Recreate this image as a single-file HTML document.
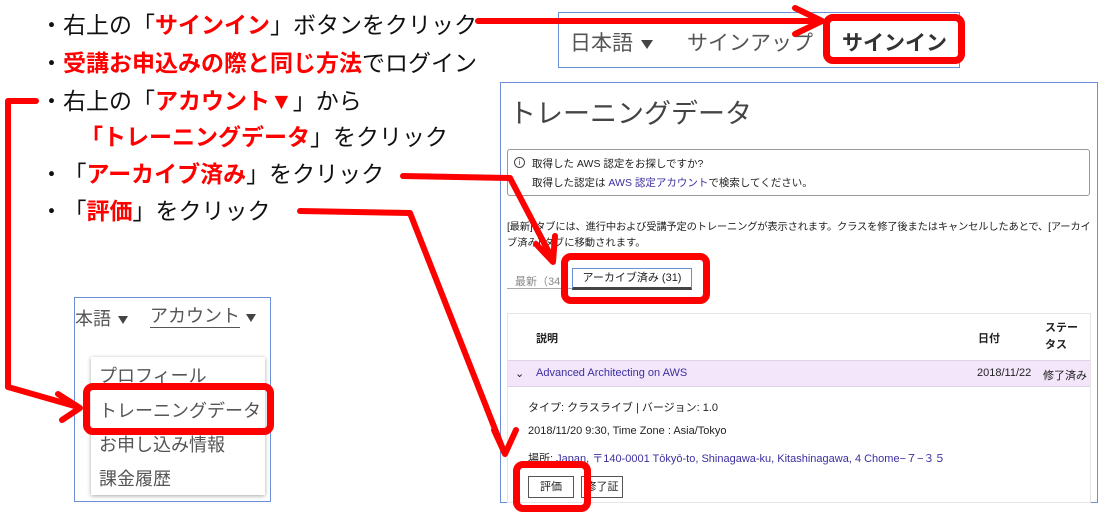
<!DOCTYPE html>
<html><head><meta charset="utf-8"><style>
*{margin:0;padding:0;box-sizing:border-box}
body{width:1109px;height:517px;background:#fff;position:relative;overflow:hidden;font-family:"Liberation Sans","Noto Sans CJK JP",sans-serif}
.a{position:absolute;white-space:nowrap}
.l{font-size:23px;color:#111;line-height:28px}
.r{color:#f00;font-weight:bold}
.s{font-size:11px;color:#222}
.tri{display:inline-block;width:0;height:0;border-left:6px solid transparent;border-right:6px solid transparent;border-top:9px solid #444;vertical-align:middle;margin-left:4px}
</style></head><body>
<div class="a l" style="left:40px;top:11px">・右上の「<span class="r">サインイン</span>」ボタンをクリック</div>
<div class="a l" style="left:40px;top:49px">・<span class="r">受講お申込みの際と同じ方法</span>でログイン</div>
<div class="a l" style="left:40px;top:87px">・右上の「<span class="r">アカウント▼</span>」から</div>
<div class="a l" style="left:80px;top:123px"><span class="r">「トレーニングデータ</span>」をクリック</div>
<div class="a l" style="left:40px;top:160px">・<span style="margin-left:12px">「</span><span class="r">アーカイブ済み</span>」をクリック</div>
<div class="a l" style="left:40px;top:197px">・<span style="margin-left:12px">「</span><span class="r">評価</span>」をクリック</div>

<!-- top-right nav -->
<div class="a" style="left:558px;top:12px;width:402px;height:56px;border:1px solid #6a8fd8"></div>
<div class="a" style="left:570px;top:27px;font-size:21px;color:#555">日本語<span class="tri" style="margin-left:8px"></span></div>
<div class="a" style="left:687px;top:27px;font-size:21px;color:#555">サインアップ</div>
<div class="a" style="left:842px;top:27px;font-size:21px;color:#333;font-weight:bold">サインイン</div>
<div class="a" style="left:823px;top:14px;width:142px;height:50px;border:7px solid #f00;border-radius:10px"></div>

<!-- main screenshot -->
<div class="a" style="left:500px;top:82px;width:598px;height:421px;border:1px solid #6a8fd8"></div>
<div class="a" style="left:509px;top:92px;font-size:27px;color:#444">トレーニングデータ</div>
<div class="a" style="left:507px;top:149px;width:583px;height:47px;border:1px solid #999;border-radius:3px"></div>
<div class="a" style="left:514px;top:157px;width:11px;height:11px;border:1px solid #444;border-radius:50%;font-size:8px;text-align:center;line-height:9px;color:#444">i</div>
<div class="a s" style="left:532px;top:156px;font-size:10.5px">取得した AWS 認定をお探しですか?</div>
<div class="a s" style="left:532px;top:175px;font-size:10.5px">取得した認定は <span style="color:#3b2fa0">AWS 認定アカウント</span>で検索してください。</div>
<div class="a s" style="left:507px;top:218px;font-size:10.3px;letter-spacing:-0.2px">[最新] タブには、進行中および受講予定のトレーニングが表示されます。クラスを修了後またはキャンセルしたあとで、[アーカイ</div>
<div class="a s" style="left:507px;top:234px;font-size:10.3px">ブ済み] タブに移動されます。</div>
<div class="a" style="left:507px;top:288px;width:160px;height:1px;background:#aaa"></div>
<div class="a s" style="left:515px;top:273px;color:#888">最新（34</div>
<div class="a" style="left:572px;top:268px;width:120px;height:22px;border:1px solid #6a8fd8;border-bottom:3px solid #444;background:#fff;font-size:11px;text-align:center;line-height:19px;color:#222">アーカイブ済み (31)</div>
<div class="a" style="left:561px;top:253px;width:149px;height:51px;border:7px solid #f00;border-radius:10px"></div>

<div class="a" style="left:507px;top:313px;width:584px;height:190px;border:1px solid #e5e5e5"></div>
<div class="a s" style="left:536px;top:330px;font-weight:bold">説明</div>
<div class="a s" style="left:978px;top:330px;font-weight:bold">日付</div>
<div class="a s" style="left:1045px;top:320px;font-weight:bold;line-height:17px">ステー<br>タス</div>
<div class="a" style="left:508px;top:360px;width:582px;height:27px;background:#f3e6fa;border-top:1px solid #e0d0ea;border-bottom:1px solid #e0d0ea"></div>
<div class="a s" style="left:515px;top:367px">⌄</div>
<div class="a s" style="left:536px;top:367px;color:#3b2fa0">Advanced Architecting on AWS</div>
<div class="a s" style="left:977px;top:367px">2018/11/22</div>
<div class="a s" style="left:1043px;top:367px">修了済み</div>
<div class="a s" style="left:528px;top:399px">タイプ: クラスライブ | バージョン: 1.0</div>
<div class="a s" style="left:528px;top:425px">2018/11/20 9:30, Time Zone : Asia/Tokyo</div>
<div class="a s" style="left:528px;top:450px">場所: <span style="color:#3b2fa0">Japan, 〒140-0001 Tōkyō-to, Shinagawa-ku, Kitashinagawa, 4 Chome−７−３５</span></div>
<div class="a s" style="left:528px;top:476px;width:46px;height:22px;border:1px solid #555;text-align:center;line-height:20px">評価</div>
<div class="a s" style="left:581px;top:476px;width:42px;height:22px;border:1px solid #555;text-align:center;line-height:20px">修了証</div>
<div class="a" style="left:513px;top:461px;width:78px;height:51px;border:7px solid #f00;border-radius:10px"></div>

<!-- dropdown screenshot -->
<div class="a" style="left:74px;top:297px;width:197px;height:205px;border:1px solid #6a8fd8"></div>
<div class="a" style="left:75px;top:305px;font-size:18px;color:#555">本語<span class="tri" style="margin-left:7px;border-width:8px 5px 0"></span></div>
<div class="a" style="left:150px;top:305px;font-size:18px;color:#555;border-bottom:1px solid #555;line-height:22px">アカウント</div>
<div class="a" style="left:246px;top:314px;width:0;height:0;border-left:5px solid transparent;border-right:5px solid transparent;border-top:8px solid #444"></div>
<div class="a" style="left:91px;top:357px;width:174px;height:138px;background:#fff;box-shadow:0 1px 4px rgba(0,0,0,.35)"></div>
<div class="a" style="left:99px;top:362px;font-size:18px;color:#555">プロフィール</div>
<div class="a" style="left:99px;top:397px;font-size:18px;color:#555">トレーニングデータ</div>
<div class="a" style="left:99px;top:431px;font-size:18px;color:#555">お申し込み情報</div>
<div class="a" style="left:99px;top:465px;font-size:18px;color:#555">課金履歴</div>
<div class="a" style="left:83px;top:383px;width:191px;height:52px;border:7px solid #f00;border-radius:10px"></div>

<svg class="a" style="left:0;top:0" width="1109" height="517" fill="none" stroke="#f00" stroke-width="6" stroke-linecap="round" stroke-linejoin="round">
<path d="M478 21H820M795 8L822 21L795 34"/>
<path d="M36 101H8V387L78 407M58 394L80 408L62 420"/>
<path d="M403 176L510 178L553 260M536 244L553 262L555 236"/>
<path d="M300 211L410 213L504 452M494 430L505 454L516 430"/>
</svg>
</body></html>
